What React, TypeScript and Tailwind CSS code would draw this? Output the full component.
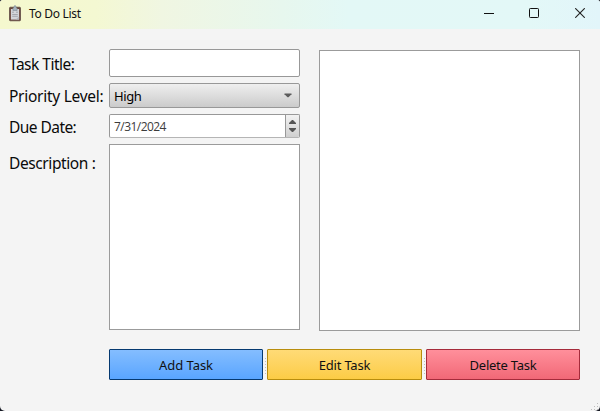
import type { ReactNode } from "react";

function ClipboardIcon() {
  return (
    <svg width="12" height="17" viewBox="0 0 12 17" className="shrink-0">
      <rect x="0.5" y="2.2" width="11" height="13.6" rx="0.9" fill="#6a4438" stroke="#54403d" strokeWidth="0.7" />
      <rect x="1.9" y="4" width="8.2" height="10.6" fill="#d3d5da" />
      <path d="M3.9 5.4V3.2L5 2.6V1.2Q6 0 7 1.2V2.6L8.1 3.2V5.4Z" fill="#a9b5bf" stroke="#7b858e" strokeWidth="0.6" />
      <path d="M3 7.2h2M7 7.2h2M3.2 9.5h5.6M3.2 11.3h5.6" stroke="#92949b" strokeWidth="0.7" />
      <path d="M6.6 14.6L10.1 11.6V14.6Z" fill="#b4b7be" />
    </svg>
  );
}

function Label({ children, className }: { children: ReactNode; className: string }) {
  return <div className={"whitespace-nowrap text-[15.5px] leading-[22px] text-[#0a0a0a] " + className}>{children}</div>;
}

function SplitHandle() {
  return (
    <svg width="4" height="31" viewBox="0 0 4 31" className="shrink-0">
      {[9, 12, 15, 18, 21, 24].map((y) => (
        <rect key={y} x="2" y={y} width="1" height="1" fill="#bdbdbd" />
      ))}
    </svg>
  );
}

function TaskButton({ children, className }: { children: ReactNode; className: string }) {
  return (
    <button className={"flex h-[31px] items-center justify-center rounded-[1px] border bg-linear-to-b pt-[2px] text-[13px] leading-none text-[#111] " + className}>
      {children}
    </button>
  );
}

export default function App() {
  return (
    <div className="flex h-[411px] w-[600px] flex-col overflow-hidden bg-[#161923] font-['Noto_Sans','Open_Sans',sans-serif]">
      <div className="flex h-full flex-col overflow-hidden rounded-t-[3px] rounded-b-[5px] bg-[#f4f4f4]">
        <header className="flex h-[29px] shrink-0 items-center bg-[linear-gradient(90deg,#f5f8ce_0%,#f4f8d2_16%,#f0f6e2_27%,#e7f7ee_47%,#e3f8f6_58%,#e3f8f7_88%,#e2f5fa_100%)] pl-[9px]">
          <div className="-mt-[3px]"><ClipboardIcon /></div>
          <span className="ml-[8px] -mt-[2px] text-[12px] tracking-[-0.3px] text-[#111]">To Do List</span>
          <div className="ml-auto mr-[15px] -mt-[3px] flex items-center">
            <svg width="10" height="10" viewBox="0 0 10 10" className="mr-[35px] -ml-px"><path d="M0 5.5H10" stroke="#111" /></svg>
            <svg width="10" height="10" viewBox="0 0 10 10" className="mr-[36px]"><rect x="0.5" y="0.5" width="9" height="9" rx="0.8" fill="none" stroke="#111" /></svg>
            <svg width="10" height="10" viewBox="0 0 10 10"><path d="M0.2 0.2L9.8 9.8M9.8 0.2L0.2 9.8" stroke="#222" strokeWidth="1.1" /></svg>
          </div>
        </header>

        <main className="flex pl-[9px] pt-5">
          <div className="flex w-[100px] shrink-0 flex-col pt-[4px]">
            <Label className="tracking-[-0.5px]">Task Title:</Label>
            <Label className="mt-[10px] tracking-[-0.27px]">Priority Level:</Label>
            <Label className="mt-[9px] tracking-[-0.55px]">Due Date:</Label>
            <Label className="mt-[14px] tracking-[-0.4px]">Description :</Label>
          </div>
          <div className="flex w-[191px] shrink-0 flex-col">
            <div className="h-[28px] rounded-[2px] border border-[#989898] bg-white" />
            <div className="mt-[6px] flex h-[25px] items-center justify-between rounded-[2px] border border-[#989898] bg-linear-to-b from-[#efefef] to-[#cbcbcb] pl-1 pr-[7px]">
              <span className="pt-[2px] text-[13px] leading-none tracking-[-0.4px] text-black">High</span>
              <svg width="8" height="5" viewBox="0 0 8 5"><path d="M0.5 0.5H7.5V1.2L4.5 4.3H3.5L0.5 1.2Z" fill="#5c5c5c" /></svg>
            </div>
            <div className="mt-[6px] flex h-[24px] justify-between overflow-hidden rounded-[2px] border border-[#989898] border-b-[#b5b5b5] bg-white">
              <span className="pl-1 pt-px font-['Open_Sans','Noto_Sans',sans-serif] text-[12px] leading-[22px] tracking-[-0.55px] text-[#3c3c3c]">7/31/2024</span>
              <div className="flex w-[14px] flex-col items-center gap-[4px] border-l border-[#989898] bg-linear-to-b from-[#f2f2f2] to-[#d0d0d0] pt-[5px]">
                <svg width="7" height="4" viewBox="0 0 7 4"><path d="M0 4V3L3 0H4L7 3V4Z" fill="#555" /></svg>
                <svg width="7" height="4" viewBox="0 0 7 4"><path d="M0 0V1L3 4H4L7 1V0Z" fill="#555" /></svg>
              </div>
            </div>
            <div className="mt-[6px] h-[186px] border border-[#9b9b9b] bg-white" />
          </div>
          <div className="ml-[19px] mt-px h-[281px] w-[261px] border border-[#9b9b9b] bg-white" />
        </main>

        <div className="mt-[18px] flex pl-[109px]">
          <TaskButton className="w-[154px] border-[#053970] from-[#84bdff] to-[#59a5ff] tracking-[-0.05px]">Add Task</TaskButton>
          <SplitHandle />
          <TaskButton className="w-[155px] border-[#b88d0d] from-[#ffdb76] to-[#fccc44] tracking-[-0.2px]">Edit Task</TaskButton>
          <SplitHandle />
          <TaskButton className="w-[154px] border-[#a52b3b] from-[#ff8f9b] to-[#f16877] tracking-[-0.25px]">Delete Task</TaskButton>
        </div>
        <svg width="9" height="9" viewBox="0 0 9 9" className="ml-auto mt-auto">
          <path d="M6 1h1v1h-1zM3 4h1v1H3zM6 4h1v1H6zM0 7h1v1H0zM3 7h1v1H3zM6 7h1v1H6z" fill="#bcbcbc" />
        </svg>
      </div>
    </div>
  );
}
